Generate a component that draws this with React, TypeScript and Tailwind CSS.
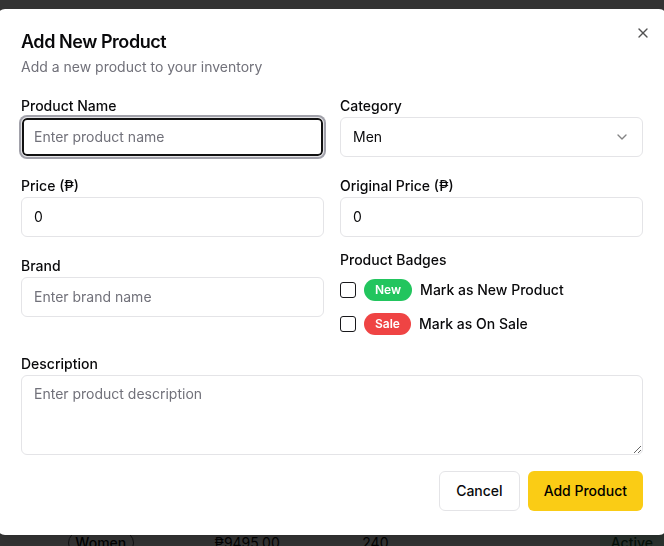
import { X, ChevronDown } from "lucide-react";

function Field({ label, children }: { label: string; children: React.ReactNode }) {
  return (
    <div>
      <div>
        <label className="text-sm font-medium text-[#09090b]">{label}</label>
      </div>
      {children}
    </div>
  );
}

const inputCls =
  "flex h-10 w-full rounded-md border border-[#e4e4e7] bg-white px-3 py-2 text-sm text-[#09090b] placeholder:text-[#71717a] outline-none";

function BadgeOption({ badge, color, text }: { badge: string; color: string; text: string }) {
  return (
    <div className="flex items-center gap-2">
      <button className="h-4 w-4 shrink-0 rounded-[3px] border border-[#18181b] bg-white" />
      <span
        className={`inline-flex items-center rounded-full border border-transparent px-2.5 py-0.5 text-xs font-semibold text-white ${color}`}
      >
        {badge}
      </span>
      <label className="text-sm font-medium leading-none text-[#09090b]">{text}</label>
    </div>
  );
}

export default function App() {
  return (
    <div className="h-screen overflow-hidden bg-white font-['Inter',sans-serif] text-[#09090b]">
      {/* page behind the overlay */}
      <div className="pt-[533px]">
        <div className="flex h-5 items-center text-sm">
          <div className="w-[68px]" />
          <span className="inline-flex h-6 w-[66px] items-center justify-center rounded-full border border-[#52525b] font-medium">
            Women
          </span>
          <div className="w-[81px]" />
          <span className="w-[148px]">₱9495.00</span>
          <span className="w-[238px]">240</span>
          <span className="inline-flex h-7 items-center rounded-md bg-[#d1fae5] px-[11px] font-medium text-[#14532d]">
            Active
          </span>
        </div>
      </div>

      {/* overlay */}
      <div className="fixed inset-0 bg-black/80" />

      {/* dialog */}
      <div className="fixed left-1/2 top-[8.5px] grid w-[670px] -translate-x-1/2 gap-4 rounded-lg bg-white p-6 shadow-lg">
        <div className="flex flex-col gap-1.5 text-left">
          <h2 className="text-lg font-semibold leading-none tracking-tight">Add New Product</h2>
          <p className="text-sm text-[#71717a]">Add a new product to your inventory</p>
        </div>

        <div className="grid grid-cols-2 gap-4">
          <Field label="Product Name">
            <input
              className={`${inputCls} border-[#111] shadow-[inset_0_0_0_2px_#111,0_0_0_2px_#a1a1aa]`}
              placeholder="Enter product name"
            />
          </Field>
          <Field label="Category">
            <button className="flex h-10 w-full items-center justify-between rounded-md border border-[#e4e4e7] bg-white px-3 py-2 text-sm">
              <span>Men</span>
              <ChevronDown className="h-4 w-4 opacity-50" />
            </button>
          </Field>

          <Field label="Price (₱)">
            <input className={inputCls} defaultValue="0" />
          </Field>
          <Field label="Original Price (₱)">
            <input className={inputCls} defaultValue="0" />
          </Field>

          <Field label="Brand">
            <input className={inputCls} placeholder="Enter brand name" />
          </Field>
          <div>
            <label className="block text-sm font-medium leading-none">Product Badges</label>
            <div className="mt-3 flex flex-col gap-3">
              <BadgeOption badge="New" color="bg-[#22c55e]" text="Mark as New Product" />
              <BadgeOption badge="Sale" color="bg-[#ef4444]" text="Mark as On Sale" />
            </div>
          </div>

          <div className="col-span-2">
            <Field label="Description">
              <textarea
                className="flex min-h-[80px] h-20 w-full rounded-md border border-[#e4e4e7] bg-white px-3 py-2 text-sm placeholder:text-[#71717a] outline-none"
                placeholder="Enter product description"
              />
            </Field>
          </div>
        </div>

        <div className="flex justify-end gap-2">
          <button className="inline-flex h-10 items-center justify-center rounded-md border border-[#e4e4e7] bg-white px-4 text-sm font-medium">
            Cancel
          </button>
          <button className="inline-flex h-10 items-center justify-center rounded-md bg-[#facc15] px-4 text-sm font-medium text-black">
            Add Product
          </button>
        </div>

        <button className="absolute right-4 top-4 rounded-sm opacity-70">
          <X className="h-4 w-4" />
        </button>
      </div>
    </div>
  );
}
